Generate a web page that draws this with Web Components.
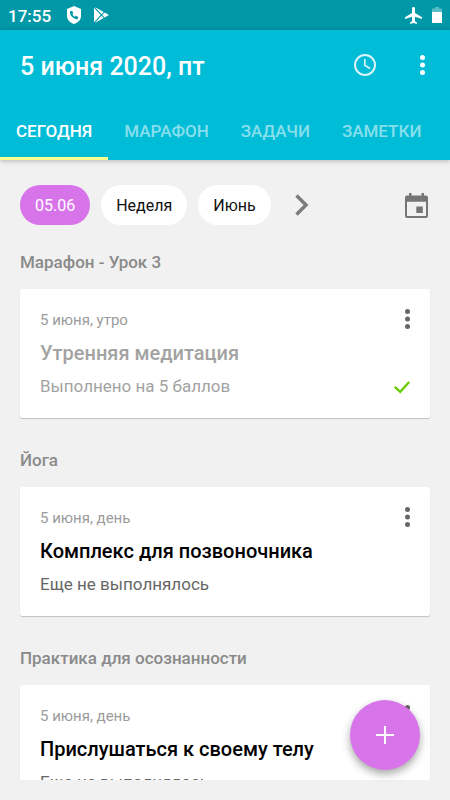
<!DOCTYPE html>
<html lang="ru">
<head>
<meta charset="utf-8">
<meta name="viewport" content="width=device-width, initial-scale=1">
<title>Ежедневник</title>
<style>
  html, body { height: 100%; margin: 0; }
  body {
    background: #f1f1f1;
    color: #000;
    font-family: Roboto, "Noto Sans", sans-serif;
  }
</style>
</head>
<body>
<planner-app></planner-app>

<script>
const resetCss = `
  * { box-sizing: border-box; }
  button {
    margin: 0; padding: 0; border: 0; background: none;
    font: inherit; color: inherit; cursor: pointer;
  }
  svg { display: block; }
`;

class BaseElement extends HTMLElement {
  connectedCallback() {
    if (this.shadowRoot) return;
    this.attachShadow({ mode: 'open' }).innerHTML =
      `<style>${resetCss}${this.css()}</style>${this.html()}`;
  }
  css() { return ''; }
  html() { return '<slot></slot>'; }
}

class StatusBar extends BaseElement {
  css() {
    return `
      :host {
        display: flex; align-items: center; height: 30px; padding: 0 8px;
        background: #0097a7; color: #fff;
      }
      time { font-size: 17px; line-height: 20px; font-weight: 500; padding-top: 1px; }
      .left { margin-left: 16px; }
      .play { margin-left: 13px; }
      .right { margin-left: auto; }
      .battery { margin-left: 10px; }
    `;
  }
  html() {
    return `
      <time>17:55</time>
      <svg class="left" width="14" height="18" viewBox="0 0 14 18" aria-hidden="true">
        <path fill="#fff" d="M7 0l7 3v7c0 4-3 6.800-7 8c-4-1.200-7-4-7-8V3z"/>
        <path fill="#0097a7" d="M3.400 5.200l1.700-.5 1.200 2.500-.9 1c.5 1.100 1.300 1.900 2.400 2.500l1-.9 2.500 1.200-.4 1.600c-.1.500-.5.600-.9.600C6.300 13 3 9.600 2.900 6c0-.4.100-.700.500-.8z"/>
      </svg>
      <svg class="play" width="15" height="16" viewBox="0 0 15 16" aria-hidden="true">
        <path fill="#fff" d="M0 .8v14.400L6.700 8zM.8 0l6.700 7.200 2.200-2.300zM.8 16l6.700-7.200 2.200 2.300zM10.600 5.400L8.200 8l2.400 2.600L15 8z"/>
      </svg>
      <svg class="right" width="17" height="17" viewBox="0 0 17 17" aria-hidden="true">
        <path fill="#fff" d="M17 11.900v-1.700L10 5.900V1.300C10 .6 9.300 0 8.500 0S7 .6 7 1.300v4.600l-7 4.300v1.700l7-2.100v4.400l-1.900 1.400V17l3.400-1 3.400 1v-1.400L10 14.200V9.800z"/>
      </svg>
      <svg class="battery" width="10" height="16" viewBox="0 0 10 16" aria-hidden="true">
        <path fill="#fff" fill-opacity=".35" d="M3 0h4v1.500h3V5H0V1.500h3z"/>
        <path fill="#fff" d="M0 5h10v11H0z"/>
      </svg>
    `;
  }
}

class IconButton extends BaseElement {
  css() {
    return `
      :host { display: block; flex: none; }
      button { display: block; }
      ::slotted(svg) { display: block; }
    `;
  }
  html() {
    return `<button type="button" aria-label="${this.getAttribute('label')}"><slot></slot></button>`;
  }
}

class MoreButton extends BaseElement {
  css() {
    return `
      :host { display: block; flex: none; color: #666; }
      button { display: block; }
    `;
  }
  html() {
    return `
      <button type="button" aria-label="Ещё">
        <svg width="5" height="20" viewBox="0 0 5 20" fill="currentColor" aria-hidden="true">
          <circle cx="2.500" cy="2.500" r="2.500"/><circle cx="2.500" cy="10" r="2.500"/><circle cx="2.500" cy="17.500" r="2.500"/>
        </svg>
      </button>`;
  }
}

class AppHeader extends BaseElement {
  css() {
    return `
      :host {
        display: block; position: relative; background: #00bcd7; color: #fff;
        box-shadow: 0 1px 5px rgba(0, 0, 0, .25);
      }
      .bar { display: flex; align-items: center; height: 70px; padding: 0 25px 0 20px; }
      h1 { flex: 1; margin: 0; font-size: 25px; line-height: 30px; font-weight: 500; padding-top: 4px; }
      more-button { color: #fff; margin-left: 44px; }
    `;
  }
  html() {
    return `
      <div class="bar">
        <h1>5 июня 2020, пт</h1>
        <icon-button label="История">
          <svg width="22" height="22" viewBox="0 0 22 22" fill="none" stroke="#fff" stroke-opacity=".85" stroke-width="2" aria-hidden="true">
            <circle cx="11" cy="11" r="10"/><path d="M10.800 5v6.300l5.200 3.200" stroke-width="1.700"/>
          </svg>
        </icon-button>
        <more-button></more-button>
      </div>
      <slot></slot>
    `;
  }
}

class TabBar extends BaseElement {
  css() { return `:host { display: flex; height: 60px; overflow: hidden; }`; }
}

class TabItem extends BaseElement {
  css() {
    return `
      :host { display: block; flex: none; border-bottom: 3px solid transparent; color: rgba(255, 255, 255, .55); }
      :host([selected]) { color: #fff; border-color: #ffff8d; }
      button { display: block; height: 100%; padding: 4px 16px 0; font-size: 17px; line-height: 20px; font-weight: 500; }
    `;
  }
  html() { return `<button type="button"><slot></slot></button>`; }
}

class FilterRow extends BaseElement {
  css() {
    return `
      :host { display: flex; align-items: center; gap: 11px; }
      .next { margin-left: 13px; }
      .calendar { margin-left: auto; margin-right: 2px; }
    `;
  }
  html() {
    return `
      <slot></slot>
      <icon-button class="next" label="Далее">
        <svg width="14" height="22" viewBox="0 0 14 22" fill="none" stroke="#7d7d7d" stroke-width="3.500" aria-hidden="true">
          <path d="M1.500 1.500l9.500 9.500-9.500 9.500"/>
        </svg>
      </icon-button>
      <icon-button class="calendar" label="Календарь">
        <svg width="23" height="25" viewBox="0 0 23 25" aria-hidden="true">
          <path fill="#757575" fill-rule="evenodd" d="M4 0h2.500v2.500h10V0H19v2.500h2A2 2 0 0 1 23 4.500V23a2 2 0 0 1-2 2H2a2 2 0 0 1-2-2V4.500a2 2 0 0 1 2-2h2zM2 8.700V23h19V8.700z"/>
          <path fill="#757575" d="M11.300 13.500h6.500v6.500h-6.500z"/>
        </svg>
      </icon-button>
    `;
  }
}

class FilterChip extends BaseElement {
  css() {
    return `
      :host { display: block; border-radius: 20px; background: #fff; color: #111; }
      :host([selected]) { background: #d874ea; color: #fff; }
      button { display: block; height: 40px; padding: 1px 15px 0; font-size: 16px; line-height: 20px; }
    `;
  }
  html() { return `<button type="button"><slot></slot></button>`; }
}

class PracticeSection extends BaseElement {
  css() {
    return `
      :host { display: block; }
      h2 { margin: 0 0 16px; font-size: 17px; line-height: 22px; font-weight: 500; color: #8a8a8a; }
    `;
  }
  html() { return `<h2>${this.getAttribute('label')}</h2><slot></slot>`; }
}

class PracticeCard extends BaseElement {
  css() {
    return `
      :host {
        display: flex; padding: 20px; border-radius: 2px; background: #fff;
        box-shadow: 0 1px 1px rgba(0, 0, 0, .2);
      }
      .body { flex: 1; min-width: 0; }
      p, h3 { margin: 0; }
      .when { font-size: 15px; line-height: 22px; color: #9b9b9b; }
      h3 { margin-top: 9px; font-size: 20px; line-height: 26px; font-weight: 500; }
      .state { margin: 9px 0 1px; font-size: 17px; line-height: 22px; color: #666; }
      :host([done]) h3, :host([done]) .state { color: #a3a3a3; }
      .side { display: flex; flex-direction: column; justify-content: space-between; align-items: flex-end; padding-bottom: 4px; }
      .check { display: none; }
      :host([done]) .check { display: block; }
    `;
  }
  html() {
    return `
      <div class="body">
        <p class="when">${this.getAttribute('when')}</p>
        <h3>${this.getAttribute('name')}</h3>
        <p class="state"><slot></slot></p>
      </div>
      <div class="side">
        <more-button></more-button>
        <svg class="check" width="16" height="13" viewBox="0 0 16 13" fill="none" stroke="#6c0" stroke-width="2.300" aria-hidden="true">
          <path d="M.8 5.800l5.400 5L15.200 1"/>
        </svg>
      </div>
    `;
  }
}

class AddButton extends BaseElement {
  css() {
    return `
      :host { position: fixed; right: 30px; bottom: 30px; }
      button {
        display: grid; place-items: center; width: 70px; height: 70px;
        border-radius: 50%; background: #d874ea;
        box-shadow: 0 4px 8px rgba(0, 0, 0, .35);
      }
    `;
  }
  html() {
    return `
      <button type="button" aria-label="Добавить">
        <svg width="18" height="18" viewBox="0 0 18 18" fill="#fff" aria-hidden="true">
          <path d="M8 0h2v8h8v2h-8v8H8v-8H0V8h8z"/>
        </svg>
      </button>`;
  }
}

class PlannerApp extends BaseElement {
  css() {
    return `
      :host { display: flex; flex-direction: column; height: 100vh; overflow: hidden; }
      status-bar, app-header { flex: none; }
      main { flex: 1; min-height: 0; overflow: hidden; margin-bottom: 20px; padding: 25px 20px 0; }
      .list { display: flex; flex-direction: column; gap: 31px; margin-top: 26px; }
    `;
  }
  html() {
    return `
      <status-bar></status-bar>
      <app-header>
        <tab-bar>
          <tab-item selected>СЕГОДНЯ</tab-item>
          <tab-item>МАРАФОН</tab-item>
          <tab-item>ЗАДАЧИ</tab-item>
          <tab-item>ЗАМЕТКИ</tab-item>
        </tab-bar>
      </app-header>
      <main>
        <filter-row>
          <filter-chip selected>05.06</filter-chip>
          <filter-chip>Неделя</filter-chip>
          <filter-chip>Июнь</filter-chip>
        </filter-row>
        <div class="list">
          <practice-section label="Марафон - Урок 3">
            <practice-card done when="5 июня, утро" name="Утренняя медитация">Выполнено на 5 баллов</practice-card>
          </practice-section>
          <practice-section label="Йога">
            <practice-card when="5 июня, день" name="Комплекс для позвоночника">Еще не выполнялось</practice-card>
          </practice-section>
          <practice-section label="Практика для осознанности">
            <practice-card when="5 июня, день" name="Прислушаться к своему телу">Еще не выполнялось</practice-card>
          </practice-section>
        </div>
      </main>
      <add-button></add-button>
    `;
  }
}

customElements.define('icon-button', IconButton);
customElements.define('more-button', MoreButton);
customElements.define('status-bar', StatusBar);
customElements.define('tab-item', TabItem);
customElements.define('tab-bar', TabBar);
customElements.define('app-header', AppHeader);
customElements.define('filter-chip', FilterChip);
customElements.define('filter-row', FilterRow);
customElements.define('practice-card', PracticeCard);
customElements.define('practice-section', PracticeSection);
customElements.define('add-button', AddButton);
customElements.define('planner-app', PlannerApp);
</script>
</body>
</html>
